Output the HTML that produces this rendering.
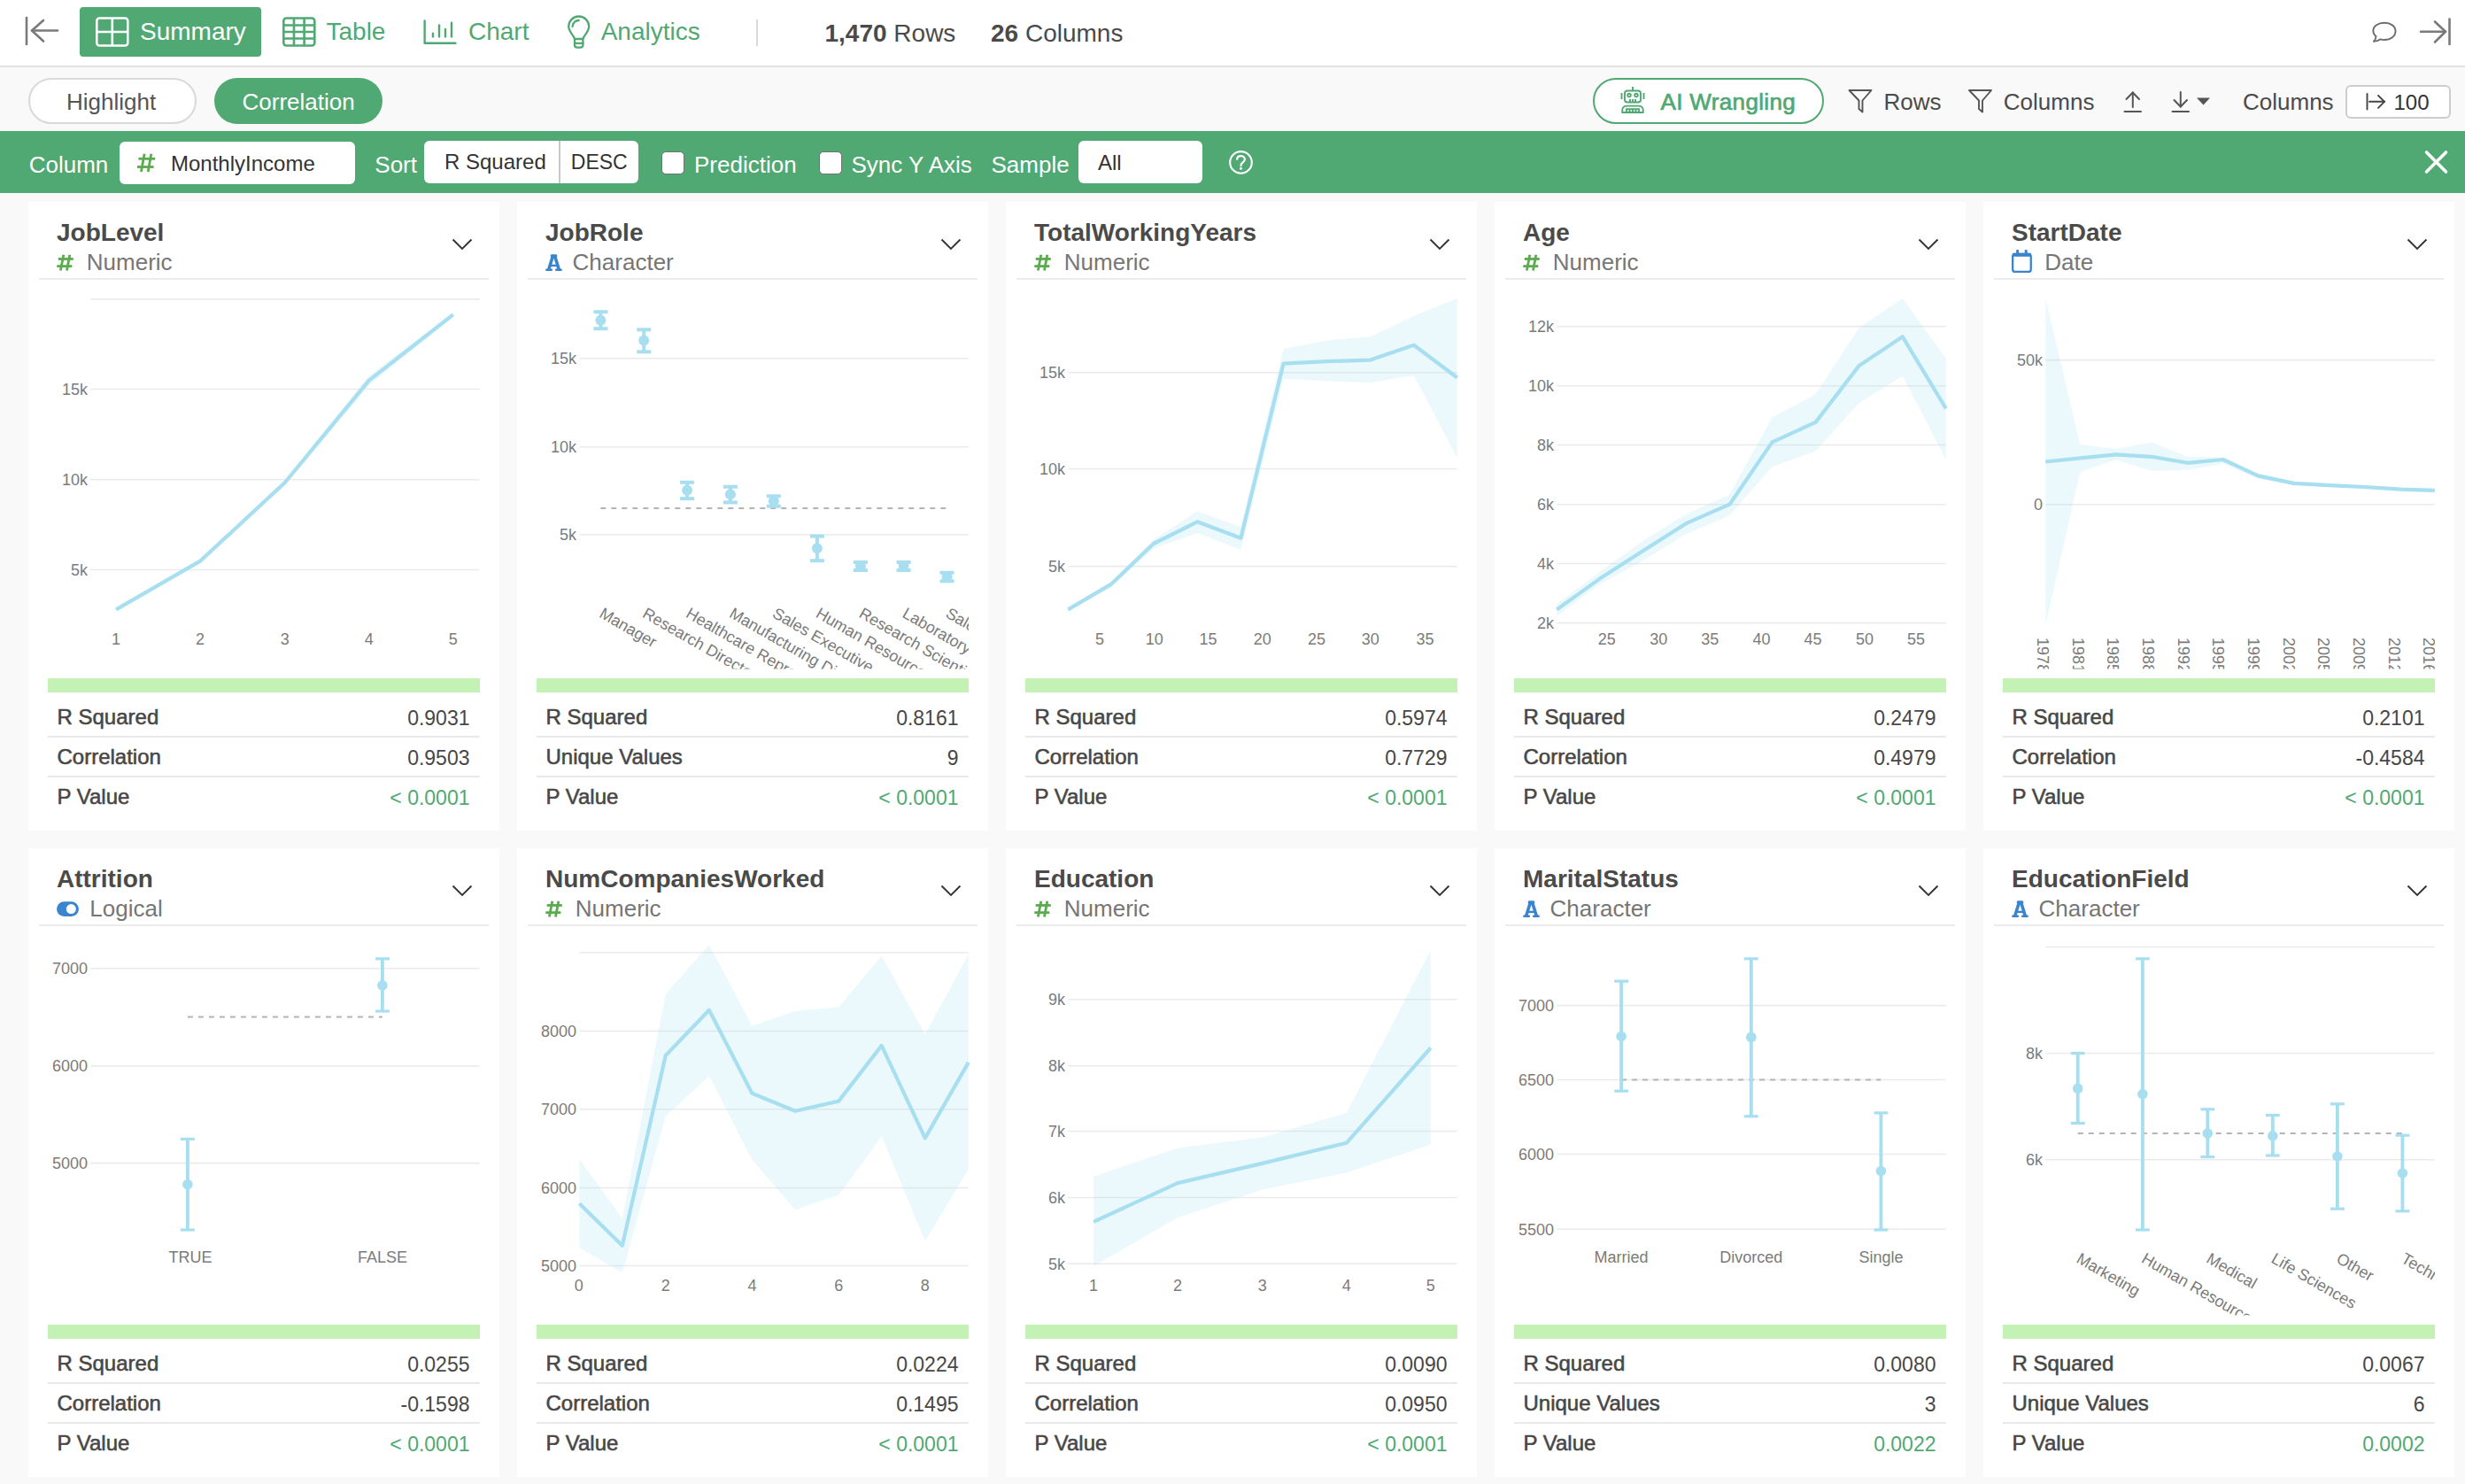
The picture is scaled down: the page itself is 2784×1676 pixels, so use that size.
<!DOCTYPE html>
<html><head><meta charset="utf-8"><title>Summary - Correlation</title>
<style>
html,body{margin:0;padding:0;}
body{width:2784px;height:1676px;position:relative;overflow:hidden;background:#f9f9f9;font-family:"Liberation Sans",sans-serif;}
.t{position:absolute;white-space:nowrap;}
.r{position:absolute;}
svg{position:absolute;left:0;top:0;}
.ax{font-family:"Liberation Sans",sans-serif;font-size:18px;fill:#7b7b7b;}
</style></head><body>
<div class="r" style="left:0.0px;top:0.0px;width:2784.0px;height:74.0px;background:#fff"></div><div class="r" style="left:0.0px;top:74.0px;width:2784.0px;height:2.0px;background:#e3e3e3"></div><div class="r" style="left:0.0px;top:76.0px;width:2784.0px;height:72.0px;background:#f9f9f9"></div><div class="r" style="left:90.0px;top:8.0px;width:205.0px;height:56.0px;background:#50a872;border-radius:4px"></div><div class="t" style="left:158.0px;top:22.0px;font-size:28px;line-height:28px;color:#fff;font-weight:normal;">Summary</div><div class="t" style="left:368.5px;top:22.0px;font-size:28px;line-height:28px;color:#50a872;font-weight:normal;">Table</div><div class="t" style="left:529.0px;top:22.0px;font-size:28px;line-height:28px;color:#50a872;font-weight:normal;">Chart</div><div class="t" style="left:678.7px;top:22.0px;font-size:28px;line-height:28px;color:#50a872;font-weight:normal;">Analytics</div><div class="r" style="left:853.5px;top:22.0px;width:2.0px;height:30.0px;background:#d9d9d9"></div><div class="t" style="left:931.5px;top:23.7px;font-size:28px;line-height:28px;color:#4a4a4a"><b>1,470</b> Rows</div><div class="t" style="left:1119px;top:23.7px;font-size:28px;line-height:28px;color:#4a4a4a"><b>26</b> Columns</div><div class="r" style="left:32.0px;top:88.0px;width:189.5px;height:52.0px;background:#fff;border:2px solid #d9d9d9;border-radius:26px;box-sizing:border-box"></div><div class="t" style="left:75.0px;top:101.7px;font-size:26px;line-height:26px;color:#555;font-weight:normal;">Highlight</div><div class="r" style="left:242.0px;top:88.0px;width:190.0px;height:52.0px;background:#50a872;border-radius:26px"></div><div class="t" style="left:273.5px;top:101.7px;font-size:26px;line-height:26px;color:#fff;font-weight:normal;">Correlation</div><div class="r" style="left:1799.0px;top:88.0px;width:260.5px;height:52.0px;background:#fff;border:2px solid #50a872;border-radius:26px;box-sizing:border-box"></div><div class="t" style="left:1875.5px;top:102.3px;font-size:26px;line-height:26px;color:#50a872;font-weight:normal;-webkit-text-stroke:0.7px #50a872;letter-spacing:0.35px">AI Wrangling</div><div class="t" style="left:2127.6px;top:102.3px;font-size:26px;line-height:26px;color:#4a4a4a;font-weight:normal;">Rows</div><div class="t" style="left:2262.8px;top:102.3px;font-size:26px;line-height:26px;color:#4a4a4a;font-weight:normal;">Columns</div><div class="t" style="left:2533.0px;top:102.3px;font-size:26px;line-height:26px;color:#4a4a4a;font-weight:normal;">Columns</div><div class="r" style="left:2648.5px;top:95.5px;width:119.0px;height:38.5px;background:#fff;border:2px solid #cdcdcd;border-radius:6px;box-sizing:border-box"></div><div class="t" style="left:2703.5px;top:103.5px;font-size:24px;line-height:24px;color:#333;font-weight:normal;">100</div><div class="r" style="left:0.0px;top:148.0px;width:2784.0px;height:70.0px;background:#50a872"></div><div class="t" style="left:32.7px;top:173.0px;font-size:26px;line-height:26px;color:#fff;font-weight:normal;">Column</div><div class="r" style="left:135.0px;top:160.0px;width:266.0px;height:48.0px;background:#fff;border-radius:6px"></div><div class="t" style="left:193.0px;top:172.9px;font-size:24px;line-height:24px;color:#333;font-weight:normal;">MonthlyIncome</div><div class="t" style="left:423.3px;top:173.0px;font-size:26px;line-height:26px;color:#fff;font-weight:normal;">Sort</div><div class="r" style="left:479.0px;top:159.0px;width:242.0px;height:48.0px;background:#fff;border-radius:6px"></div><div class="r" style="left:631.0px;top:159.0px;width:2.0px;height:48.0px;background:#c8c8c8"></div><div class="t" style="left:502.0px;top:171.3px;font-size:24px;line-height:24px;color:#333;font-weight:normal;">R Squared</div><div class="t" style="left:644.8px;top:172.1px;font-size:23px;line-height:23px;color:#333;font-weight:normal;">DESC</div><div class="r" style="left:747.2px;top:171.1px;width:25.5px;height:25.7px;background:#fff;border:1.9px solid #727272;border-radius:5px;box-sizing:border-box"></div><div class="t" style="left:784.0px;top:173.0px;font-size:26px;line-height:26px;color:#fff;font-weight:normal;">Prediction</div><div class="r" style="left:925.2px;top:171.1px;width:25.5px;height:25.7px;background:#fff;border:1.9px solid #727272;border-radius:5px;box-sizing:border-box"></div><div class="t" style="left:961.5px;top:173.0px;font-size:26px;line-height:26px;color:#fff;font-weight:normal;">Sync Y Axis</div><div class="t" style="left:1119.5px;top:173.0px;font-size:26px;line-height:26px;color:#fff;font-weight:normal;">Sample</div><div class="r" style="left:1218.0px;top:159.0px;width:140.0px;height:48.0px;background:#fff;border-radius:6px"></div><div class="t" style="left:1240.0px;top:171.7px;font-size:24px;line-height:24px;color:#333;font-weight:normal;">All</div><div class="r" style="left:32.0px;top:228.0px;width:532.0px;height:710.0px;background:#fff"></div><div class="t" style="left:64.0px;top:248.6px;font-size:28px;line-height:28px;color:#4a4a4a;font-weight:bold;">JobLevel</div><div class="t" style="left:97.8px;top:283.2px;font-size:26px;line-height:26px;color:#767676;font-weight:normal;">Numeric</div><div class="r" style="left:44.0px;top:313.5px;width:508.0px;height:2.0px;background:#ececec"></div><div class="r" style="left:54.0px;top:766.0px;width:488.0px;height:16.0px;background:#c3f2b4"></div><div class="t" style="left:64.5px;top:798.0px;font-size:24px;line-height:24px;color:#474747;font-weight:normal;-webkit-text-stroke:0.55px #474747">R Squared</div><div class="t" style="left:-469.5px;width:1000px;text-align:right;top:800.3px;font-size:23px;line-height:23px;color:#474747;font-weight:normal;">0.9031</div><div class="r" style="left:54.0px;top:831.0px;width:488.0px;height:2.0px;background:#e9e9e9"></div><div class="t" style="left:64.5px;top:843.0px;font-size:24px;line-height:24px;color:#474747;font-weight:normal;-webkit-text-stroke:0.55px #474747">Correlation</div><div class="t" style="left:-469.5px;width:1000px;text-align:right;top:845.3px;font-size:23px;line-height:23px;color:#474747;font-weight:normal;">0.9503</div><div class="r" style="left:54.0px;top:876.0px;width:488.0px;height:2.0px;background:#e9e9e9"></div><div class="t" style="left:64.5px;top:888.0px;font-size:24px;line-height:24px;color:#474747;font-weight:normal;-webkit-text-stroke:0.55px #474747">P Value</div><div class="t" style="left:-469.5px;width:1000px;text-align:right;top:890.3px;font-size:23px;line-height:23px;color:#50a872;font-weight:normal;">&lt; 0.0001</div><div class="r" style="left:584.0px;top:228.0px;width:532.0px;height:710.0px;background:#fff"></div><div class="t" style="left:616.0px;top:248.6px;font-size:28px;line-height:28px;color:#4a4a4a;font-weight:bold;">JobRole</div><div class="t" style="left:646.6px;top:283.2px;font-size:26px;line-height:26px;color:#767676;font-weight:normal;">Character</div><div class="r" style="left:596.0px;top:313.5px;width:508.0px;height:2.0px;background:#ececec"></div><div class="r" style="left:606.0px;top:766.0px;width:488.0px;height:16.0px;background:#c3f2b4"></div><div class="t" style="left:616.5px;top:798.0px;font-size:24px;line-height:24px;color:#474747;font-weight:normal;-webkit-text-stroke:0.55px #474747">R Squared</div><div class="t" style="left:82.5px;width:1000px;text-align:right;top:800.3px;font-size:23px;line-height:23px;color:#474747;font-weight:normal;">0.8161</div><div class="r" style="left:606.0px;top:831.0px;width:488.0px;height:2.0px;background:#e9e9e9"></div><div class="t" style="left:616.5px;top:843.0px;font-size:24px;line-height:24px;color:#474747;font-weight:normal;-webkit-text-stroke:0.55px #474747">Unique Values</div><div class="t" style="left:82.5px;width:1000px;text-align:right;top:845.3px;font-size:23px;line-height:23px;color:#474747;font-weight:normal;">9</div><div class="r" style="left:606.0px;top:876.0px;width:488.0px;height:2.0px;background:#e9e9e9"></div><div class="t" style="left:616.5px;top:888.0px;font-size:24px;line-height:24px;color:#474747;font-weight:normal;-webkit-text-stroke:0.55px #474747">P Value</div><div class="t" style="left:82.5px;width:1000px;text-align:right;top:890.3px;font-size:23px;line-height:23px;color:#50a872;font-weight:normal;">&lt; 0.0001</div><div class="r" style="left:1136.0px;top:228.0px;width:532.0px;height:710.0px;background:#fff"></div><div class="t" style="left:1168.0px;top:248.6px;font-size:28px;line-height:28px;color:#4a4a4a;font-weight:bold;">TotalWorkingYears</div><div class="t" style="left:1201.8px;top:283.2px;font-size:26px;line-height:26px;color:#767676;font-weight:normal;">Numeric</div><div class="r" style="left:1148.0px;top:313.5px;width:508.0px;height:2.0px;background:#ececec"></div><div class="r" style="left:1158.0px;top:766.0px;width:488.0px;height:16.0px;background:#c3f2b4"></div><div class="t" style="left:1168.5px;top:798.0px;font-size:24px;line-height:24px;color:#474747;font-weight:normal;-webkit-text-stroke:0.55px #474747">R Squared</div><div class="t" style="left:634.5px;width:1000px;text-align:right;top:800.3px;font-size:23px;line-height:23px;color:#474747;font-weight:normal;">0.5974</div><div class="r" style="left:1158.0px;top:831.0px;width:488.0px;height:2.0px;background:#e9e9e9"></div><div class="t" style="left:1168.5px;top:843.0px;font-size:24px;line-height:24px;color:#474747;font-weight:normal;-webkit-text-stroke:0.55px #474747">Correlation</div><div class="t" style="left:634.5px;width:1000px;text-align:right;top:845.3px;font-size:23px;line-height:23px;color:#474747;font-weight:normal;">0.7729</div><div class="r" style="left:1158.0px;top:876.0px;width:488.0px;height:2.0px;background:#e9e9e9"></div><div class="t" style="left:1168.5px;top:888.0px;font-size:24px;line-height:24px;color:#474747;font-weight:normal;-webkit-text-stroke:0.55px #474747">P Value</div><div class="t" style="left:634.5px;width:1000px;text-align:right;top:890.3px;font-size:23px;line-height:23px;color:#50a872;font-weight:normal;">&lt; 0.0001</div><div class="r" style="left:1688.0px;top:228.0px;width:532.0px;height:710.0px;background:#fff"></div><div class="t" style="left:1720.0px;top:248.6px;font-size:28px;line-height:28px;color:#4a4a4a;font-weight:bold;">Age</div><div class="t" style="left:1753.8px;top:283.2px;font-size:26px;line-height:26px;color:#767676;font-weight:normal;">Numeric</div><div class="r" style="left:1700.0px;top:313.5px;width:508.0px;height:2.0px;background:#ececec"></div><div class="r" style="left:1710.0px;top:766.0px;width:488.0px;height:16.0px;background:#c3f2b4"></div><div class="t" style="left:1720.5px;top:798.0px;font-size:24px;line-height:24px;color:#474747;font-weight:normal;-webkit-text-stroke:0.55px #474747">R Squared</div><div class="t" style="left:1186.5px;width:1000px;text-align:right;top:800.3px;font-size:23px;line-height:23px;color:#474747;font-weight:normal;">0.2479</div><div class="r" style="left:1710.0px;top:831.0px;width:488.0px;height:2.0px;background:#e9e9e9"></div><div class="t" style="left:1720.5px;top:843.0px;font-size:24px;line-height:24px;color:#474747;font-weight:normal;-webkit-text-stroke:0.55px #474747">Correlation</div><div class="t" style="left:1186.5px;width:1000px;text-align:right;top:845.3px;font-size:23px;line-height:23px;color:#474747;font-weight:normal;">0.4979</div><div class="r" style="left:1710.0px;top:876.0px;width:488.0px;height:2.0px;background:#e9e9e9"></div><div class="t" style="left:1720.5px;top:888.0px;font-size:24px;line-height:24px;color:#474747;font-weight:normal;-webkit-text-stroke:0.55px #474747">P Value</div><div class="t" style="left:1186.5px;width:1000px;text-align:right;top:890.3px;font-size:23px;line-height:23px;color:#50a872;font-weight:normal;">&lt; 0.0001</div><div class="r" style="left:2240.0px;top:228.0px;width:532.0px;height:710.0px;background:#fff"></div><div class="t" style="left:2272.0px;top:248.6px;font-size:28px;line-height:28px;color:#4a4a4a;font-weight:bold;">StartDate</div><div class="t" style="left:2309.3px;top:283.2px;font-size:26px;line-height:26px;color:#767676;font-weight:normal;">Date</div><div class="r" style="left:2252.0px;top:313.5px;width:508.0px;height:2.0px;background:#ececec"></div><div class="r" style="left:2262.0px;top:766.0px;width:488.0px;height:16.0px;background:#c3f2b4"></div><div class="t" style="left:2272.5px;top:798.0px;font-size:24px;line-height:24px;color:#474747;font-weight:normal;-webkit-text-stroke:0.55px #474747">R Squared</div><div class="t" style="left:1738.5px;width:1000px;text-align:right;top:800.3px;font-size:23px;line-height:23px;color:#474747;font-weight:normal;">0.2101</div><div class="r" style="left:2262.0px;top:831.0px;width:488.0px;height:2.0px;background:#e9e9e9"></div><div class="t" style="left:2272.5px;top:843.0px;font-size:24px;line-height:24px;color:#474747;font-weight:normal;-webkit-text-stroke:0.55px #474747">Correlation</div><div class="t" style="left:1738.5px;width:1000px;text-align:right;top:845.3px;font-size:23px;line-height:23px;color:#474747;font-weight:normal;">-0.4584</div><div class="r" style="left:2262.0px;top:876.0px;width:488.0px;height:2.0px;background:#e9e9e9"></div><div class="t" style="left:2272.5px;top:888.0px;font-size:24px;line-height:24px;color:#474747;font-weight:normal;-webkit-text-stroke:0.55px #474747">P Value</div><div class="t" style="left:1738.5px;width:1000px;text-align:right;top:890.3px;font-size:23px;line-height:23px;color:#50a872;font-weight:normal;">&lt; 0.0001</div><div class="r" style="left:32.0px;top:958.0px;width:532.0px;height:710.0px;background:#fff"></div><div class="t" style="left:64.0px;top:978.6px;font-size:28px;line-height:28px;color:#4a4a4a;font-weight:bold;">Attrition</div><div class="t" style="left:101.3px;top:1013.2px;font-size:26px;line-height:26px;color:#767676;font-weight:normal;">Logical</div><div class="r" style="left:44.0px;top:1043.5px;width:508.0px;height:2.0px;background:#ececec"></div><div class="r" style="left:54.0px;top:1496.0px;width:488.0px;height:16.0px;background:#c3f2b4"></div><div class="t" style="left:64.5px;top:1528.0px;font-size:24px;line-height:24px;color:#474747;font-weight:normal;-webkit-text-stroke:0.55px #474747">R Squared</div><div class="t" style="left:-469.5px;width:1000px;text-align:right;top:1530.3px;font-size:23px;line-height:23px;color:#474747;font-weight:normal;">0.0255</div><div class="r" style="left:54.0px;top:1561.0px;width:488.0px;height:2.0px;background:#e9e9e9"></div><div class="t" style="left:64.5px;top:1573.0px;font-size:24px;line-height:24px;color:#474747;font-weight:normal;-webkit-text-stroke:0.55px #474747">Correlation</div><div class="t" style="left:-469.5px;width:1000px;text-align:right;top:1575.3px;font-size:23px;line-height:23px;color:#474747;font-weight:normal;">-0.1598</div><div class="r" style="left:54.0px;top:1606.0px;width:488.0px;height:2.0px;background:#e9e9e9"></div><div class="t" style="left:64.5px;top:1618.0px;font-size:24px;line-height:24px;color:#474747;font-weight:normal;-webkit-text-stroke:0.55px #474747">P Value</div><div class="t" style="left:-469.5px;width:1000px;text-align:right;top:1620.3px;font-size:23px;line-height:23px;color:#50a872;font-weight:normal;">&lt; 0.0001</div><div class="r" style="left:584.0px;top:958.0px;width:532.0px;height:710.0px;background:#fff"></div><div class="t" style="left:616.0px;top:978.6px;font-size:28px;line-height:28px;color:#4a4a4a;font-weight:bold;">NumCompaniesWorked</div><div class="t" style="left:649.8px;top:1013.2px;font-size:26px;line-height:26px;color:#767676;font-weight:normal;">Numeric</div><div class="r" style="left:596.0px;top:1043.5px;width:508.0px;height:2.0px;background:#ececec"></div><div class="r" style="left:606.0px;top:1496.0px;width:488.0px;height:16.0px;background:#c3f2b4"></div><div class="t" style="left:616.5px;top:1528.0px;font-size:24px;line-height:24px;color:#474747;font-weight:normal;-webkit-text-stroke:0.55px #474747">R Squared</div><div class="t" style="left:82.5px;width:1000px;text-align:right;top:1530.3px;font-size:23px;line-height:23px;color:#474747;font-weight:normal;">0.0224</div><div class="r" style="left:606.0px;top:1561.0px;width:488.0px;height:2.0px;background:#e9e9e9"></div><div class="t" style="left:616.5px;top:1573.0px;font-size:24px;line-height:24px;color:#474747;font-weight:normal;-webkit-text-stroke:0.55px #474747">Correlation</div><div class="t" style="left:82.5px;width:1000px;text-align:right;top:1575.3px;font-size:23px;line-height:23px;color:#474747;font-weight:normal;">0.1495</div><div class="r" style="left:606.0px;top:1606.0px;width:488.0px;height:2.0px;background:#e9e9e9"></div><div class="t" style="left:616.5px;top:1618.0px;font-size:24px;line-height:24px;color:#474747;font-weight:normal;-webkit-text-stroke:0.55px #474747">P Value</div><div class="t" style="left:82.5px;width:1000px;text-align:right;top:1620.3px;font-size:23px;line-height:23px;color:#50a872;font-weight:normal;">&lt; 0.0001</div><div class="r" style="left:1136.0px;top:958.0px;width:532.0px;height:710.0px;background:#fff"></div><div class="t" style="left:1168.0px;top:978.6px;font-size:28px;line-height:28px;color:#4a4a4a;font-weight:bold;">Education</div><div class="t" style="left:1201.8px;top:1013.2px;font-size:26px;line-height:26px;color:#767676;font-weight:normal;">Numeric</div><div class="r" style="left:1148.0px;top:1043.5px;width:508.0px;height:2.0px;background:#ececec"></div><div class="r" style="left:1158.0px;top:1496.0px;width:488.0px;height:16.0px;background:#c3f2b4"></div><div class="t" style="left:1168.5px;top:1528.0px;font-size:24px;line-height:24px;color:#474747;font-weight:normal;-webkit-text-stroke:0.55px #474747">R Squared</div><div class="t" style="left:634.5px;width:1000px;text-align:right;top:1530.3px;font-size:23px;line-height:23px;color:#474747;font-weight:normal;">0.0090</div><div class="r" style="left:1158.0px;top:1561.0px;width:488.0px;height:2.0px;background:#e9e9e9"></div><div class="t" style="left:1168.5px;top:1573.0px;font-size:24px;line-height:24px;color:#474747;font-weight:normal;-webkit-text-stroke:0.55px #474747">Correlation</div><div class="t" style="left:634.5px;width:1000px;text-align:right;top:1575.3px;font-size:23px;line-height:23px;color:#474747;font-weight:normal;">0.0950</div><div class="r" style="left:1158.0px;top:1606.0px;width:488.0px;height:2.0px;background:#e9e9e9"></div><div class="t" style="left:1168.5px;top:1618.0px;font-size:24px;line-height:24px;color:#474747;font-weight:normal;-webkit-text-stroke:0.55px #474747">P Value</div><div class="t" style="left:634.5px;width:1000px;text-align:right;top:1620.3px;font-size:23px;line-height:23px;color:#50a872;font-weight:normal;">&lt; 0.0001</div><div class="r" style="left:1688.0px;top:958.0px;width:532.0px;height:710.0px;background:#fff"></div><div class="t" style="left:1720.0px;top:978.6px;font-size:28px;line-height:28px;color:#4a4a4a;font-weight:bold;">MaritalStatus</div><div class="t" style="left:1750.6px;top:1013.2px;font-size:26px;line-height:26px;color:#767676;font-weight:normal;">Character</div><div class="r" style="left:1700.0px;top:1043.5px;width:508.0px;height:2.0px;background:#ececec"></div><div class="r" style="left:1710.0px;top:1496.0px;width:488.0px;height:16.0px;background:#c3f2b4"></div><div class="t" style="left:1720.5px;top:1528.0px;font-size:24px;line-height:24px;color:#474747;font-weight:normal;-webkit-text-stroke:0.55px #474747">R Squared</div><div class="t" style="left:1186.5px;width:1000px;text-align:right;top:1530.3px;font-size:23px;line-height:23px;color:#474747;font-weight:normal;">0.0080</div><div class="r" style="left:1710.0px;top:1561.0px;width:488.0px;height:2.0px;background:#e9e9e9"></div><div class="t" style="left:1720.5px;top:1573.0px;font-size:24px;line-height:24px;color:#474747;font-weight:normal;-webkit-text-stroke:0.55px #474747">Unique Values</div><div class="t" style="left:1186.5px;width:1000px;text-align:right;top:1575.3px;font-size:23px;line-height:23px;color:#474747;font-weight:normal;">3</div><div class="r" style="left:1710.0px;top:1606.0px;width:488.0px;height:2.0px;background:#e9e9e9"></div><div class="t" style="left:1720.5px;top:1618.0px;font-size:24px;line-height:24px;color:#474747;font-weight:normal;-webkit-text-stroke:0.55px #474747">P Value</div><div class="t" style="left:1186.5px;width:1000px;text-align:right;top:1620.3px;font-size:23px;line-height:23px;color:#50a872;font-weight:normal;">0.0022</div><div class="r" style="left:2240.0px;top:958.0px;width:532.0px;height:710.0px;background:#fff"></div><div class="t" style="left:2272.0px;top:978.6px;font-size:28px;line-height:28px;color:#4a4a4a;font-weight:bold;">EducationField</div><div class="t" style="left:2302.6px;top:1013.2px;font-size:26px;line-height:26px;color:#767676;font-weight:normal;">Character</div><div class="r" style="left:2252.0px;top:1043.5px;width:508.0px;height:2.0px;background:#ececec"></div><div class="r" style="left:2262.0px;top:1496.0px;width:488.0px;height:16.0px;background:#c3f2b4"></div><div class="t" style="left:2272.5px;top:1528.0px;font-size:24px;line-height:24px;color:#474747;font-weight:normal;-webkit-text-stroke:0.55px #474747">R Squared</div><div class="t" style="left:1738.5px;width:1000px;text-align:right;top:1530.3px;font-size:23px;line-height:23px;color:#474747;font-weight:normal;">0.0067</div><div class="r" style="left:2262.0px;top:1561.0px;width:488.0px;height:2.0px;background:#e9e9e9"></div><div class="t" style="left:2272.5px;top:1573.0px;font-size:24px;line-height:24px;color:#474747;font-weight:normal;-webkit-text-stroke:0.55px #474747">Unique Values</div><div class="t" style="left:1738.5px;width:1000px;text-align:right;top:1575.3px;font-size:23px;line-height:23px;color:#474747;font-weight:normal;">6</div><div class="r" style="left:2262.0px;top:1606.0px;width:488.0px;height:2.0px;background:#e9e9e9"></div><div class="t" style="left:2272.5px;top:1618.0px;font-size:24px;line-height:24px;color:#474747;font-weight:normal;-webkit-text-stroke:0.55px #474747">P Value</div><div class="t" style="left:1738.5px;width:1000px;text-align:right;top:1620.3px;font-size:23px;line-height:23px;color:#50a872;font-weight:normal;">0.0002</div>
<svg width="2784" height="1676" viewBox="0 0 2784 1676"><g stroke="#7a7a7a" stroke-width="2.6" fill="none" stroke-linecap="round" stroke-linejoin="round"><line x1="30" y1="20" x2="30" y2="50"/><line x1="36" y1="34.5" x2="65" y2="34.5"/><polyline points="49,23 36,34.5 49,46.5"/></g><g stroke="#fff" stroke-width="2.6" fill="none"><rect x="109.3" y="20.5" width="35" height="31" rx="3"/><line x1="126.8" y1="20.5" x2="126.8" y2="51.5"/><line x1="109.3" y1="36" x2="144.3" y2="36"/></g><g stroke="#50a872" stroke-width="2.6" fill="none"><rect x="320.3" y="20.5" width="35" height="31" rx="3"/><line x1="332" y1="20.5" x2="332" y2="51.5"/><line x1="343.6" y1="20.5" x2="343.6" y2="51.5"/><line x1="320.3" y1="28.5" x2="355.3" y2="28.5"/><line x1="320.3" y1="36" x2="355.3" y2="36"/><line x1="320.3" y1="43.5" x2="355.3" y2="43.5"/></g><g stroke="#50a872" stroke-width="2.4" fill="none" stroke-linecap="round" stroke-linejoin="round"><polyline points="479.6,23.4 479.6,48.7 514.4,48.7"/><line x1="489" y1="37.6" x2="489" y2="41.4"/><line x1="496" y1="28.4" x2="496" y2="41.4"/><line x1="503" y1="32.9" x2="503" y2="41.4"/><line x1="510" y1="25.8" x2="510" y2="41.4"/></g><g stroke="#50a872" stroke-width="2.3" fill="none" stroke-linecap="round" stroke-linejoin="round"><path d="M649,44 C648.2,40 642.3,35.8 642.2,30 A11.5,11.5 0 1 1 665.2,30 C665.1,35.8 659.2,40 658.4,44 Z"/><path d="M649,44 L649,50.8 Q649,53.6 652,53.6 L655.4,53.6 Q658.4,53.6 658.4,50.8 L658.4,44"/><line x1="649" y1="48.9" x2="658.4" y2="48.9"/><path d="M646.6,30 A7.1,7.1 0 0 1 653.7,23"/></g><g stroke="#6d6d6d" stroke-width="1.9" fill="none" stroke-linejoin="round"><path d="M2683.5,41 C2680.5,38.5 2680.3,35.5 2680.3,35 C2680.3,29.5 2686,25.8 2693,25.8 C2700,25.8 2705.5,29.5 2705.5,35.3 C2705.5,41 2700,45 2693,45 C2691.5,45 2690,44.7 2688.5,44.3 C2686.5,45.8 2684,46.8 2680.8,46.8 C2682.5,45 2683.5,43 2683.5,41 Z"/></g><g stroke="#7a7a7a" stroke-width="2.6" fill="none" stroke-linecap="round" stroke-linejoin="round"><line x1="2734" y1="35.8" x2="2762" y2="35.8"/><polyline points="2750,24.5 2762,35.8 2750,47.5"/><line x1="2766.5" y1="21.5" x2="2766.5" y2="50"/></g><g stroke="#50a872" stroke-width="1.9" fill="none"><line x1="1844" y1="98" x2="1844" y2="102"/><rect x="1835" y="102.5" width="18" height="13" rx="3"/><circle cx="1840" cy="107.5" r="1.8"/><circle cx="1848" cy="107.5" r="1.8"/><line x1="1841" y1="112" x2="1841" y2="115"/><line x1="1844" y1="112" x2="1844" y2="115"/><line x1="1847" y1="112" x2="1847" y2="115"/><line x1="1831.5" y1="105" x2="1831.5" y2="112"/><line x1="1856.5" y1="105" x2="1856.5" y2="112"/><path d="M1832.3,127 L1832.3,123.5 Q1833,119.6 1837.5,119.6 L1850.5,119.6 Q1855,119.6 1855.7,123.5 L1855.7,127 Z"/><rect x="1837" y="123.2" width="14" height="3.6"/><line x1="1840.5" y1="123.2" x2="1840.5" y2="126.8"/><line x1="1844" y1="123.2" x2="1844" y2="126.8"/><line x1="1847.5" y1="123.2" x2="1847.5" y2="126.8"/></g><path d="M2088.5,102 L2113.5,102 L2103.5,113.5 L2103.5,126.5 L2099.5,123 L2099.5,113.5 Z" stroke="#555" stroke-width="1.9" fill="none" stroke-linejoin="round"/><path d="M2224,102 L2249,102 L2239,113.5 L2239,126.5 L2235,123 L2235,113.5 Z" stroke="#555" stroke-width="1.9" fill="none" stroke-linejoin="round"/><g stroke="#555" stroke-width="2" fill="none" stroke-linecap="round"><line x1="2399.5" y1="126" x2="2418" y2="126"/><line x1="2408.8" y1="104.5" x2="2408.8" y2="121"/><polyline points="2401.5,112 2408.8,104.5 2416,112"/><line x1="2453.5" y1="126" x2="2472" y2="126"/><line x1="2462.8" y1="104" x2="2462.8" y2="120.5"/><polyline points="2455.5,113 2462.8,120.5 2470,113"/></g><path d="M2481,110.5 L2496,110.5 L2488.5,118.5 Z" fill="#555"/><g stroke="#444" stroke-width="1.9" fill="none" stroke-linecap="round"><line x1="2673.5" y1="106" x2="2673.5" y2="123.5"/><line x1="2676" y1="114.8" x2="2693" y2="114.8"/><polyline points="2686,107.8 2693,114.8 2686,121.8"/></g><g stroke="#5caa4f" stroke-width="2.8" stroke-linecap="butt" fill="none"><line x1="163.12" y1="173.82" x2="159.41" y2="193.98"/><line x1="170.82" y1="173.82" x2="167.18" y2="193.98"/><line x1="156.44" y1="179.28" x2="175.20" y2="179.28"/><line x1="154.90" y1="188.52" x2="173.56" y2="188.52"/></g><circle cx="1401.5" cy="183.4" r="12.3" stroke="#fff" stroke-width="2.1" fill="none"/><path d="M1397.2,179.6 C1397.4,177.3 1399.3,176.2 1401.5,176.2 C1404,176.2 1405.9,177.9 1405.9,180.1 C1405.9,182.1 1404.5,183 1403.2,183.9 C1402,184.7 1401.5,185.4 1401.5,187.2" stroke="#fff" stroke-width="2.3" fill="none" stroke-linecap="round"/><circle cx="1401.5" cy="190.3" r="1.5" fill="#fff"/><g stroke="#fff" stroke-width="3.6" stroke-linecap="round"><line x1="2740.5" y1="172" x2="2762.5" y2="194"/><line x1="2762.5" y1="172" x2="2740.5" y2="194"/></g><g stroke="#5caa4f" stroke-width="2.8" stroke-linecap="butt" fill="none"><line x1="71.79" y1="287.67" x2="68.41" y2="305.43"/><line x1="78.80" y1="287.67" x2="75.49" y2="305.43"/><line x1="65.71" y1="292.48" x2="82.80" y2="292.48"/><line x1="64.30" y1="300.62" x2="81.30" y2="300.62"/></g><polyline points="511.5,270.5 522,281 532.5,270.5" stroke="#333" stroke-width="1.9" fill="none"/><g stroke="#3a84cf" fill="none"><path d="M624.6,288.5 L619.6,304.7 M626.4,288.5 L631.4,304.7" stroke-width="3.6"/><path d="M623.2,288.9 L627.8,288.9" stroke-width="3.2" stroke-linecap="round"/><line x1="621.6" y1="299.9" x2="629.4" y2="299.9" stroke-width="2.4"/><line x1="617.4" y1="304.7" x2="622.8" y2="304.7" stroke-width="2.6" stroke-linecap="round"/><line x1="628.2" y1="304.7" x2="633.6" y2="304.7" stroke-width="2.6" stroke-linecap="round"/></g><polyline points="1063.5,270.5 1074,281 1084.5,270.5" stroke="#333" stroke-width="1.9" fill="none"/><g stroke="#5caa4f" stroke-width="2.8" stroke-linecap="butt" fill="none"><line x1="1175.79" y1="287.67" x2="1172.41" y2="305.43"/><line x1="1182.80" y1="287.67" x2="1179.49" y2="305.43"/><line x1="1169.71" y1="292.48" x2="1186.80" y2="292.48"/><line x1="1168.30" y1="300.62" x2="1185.30" y2="300.62"/></g><polyline points="1615.5,270.5 1626,281 1636.5,270.5" stroke="#333" stroke-width="1.9" fill="none"/><g stroke="#5caa4f" stroke-width="2.8" stroke-linecap="butt" fill="none"><line x1="1727.79" y1="287.67" x2="1724.41" y2="305.43"/><line x1="1734.80" y1="287.67" x2="1731.49" y2="305.43"/><line x1="1721.71" y1="292.48" x2="1738.80" y2="292.48"/><line x1="1720.30" y1="300.62" x2="1737.30" y2="300.62"/></g><polyline points="2167.5,270.5 2178,281 2188.5,270.5" stroke="#333" stroke-width="1.9" fill="none"/><g stroke="#3a84cf" fill="none"><rect x="2273.15" y="286.85" width="20.6" height="20.1" rx="2.8" stroke-width="2.3"/><line x1="2273.15" y1="287.80" x2="2293.75" y2="287.80" stroke-width="4"/><line x1="2278.6" y1="282.1" x2="2278.6" y2="287.0" stroke-width="2.9"/><line x1="2288.2" y1="282.1" x2="2288.2" y2="287.0" stroke-width="2.9"/></g><polyline points="2719.5,270.5 2730,281 2740.5,270.5" stroke="#333" stroke-width="1.9" fill="none"/><rect x="64" y="1018.2" width="25" height="16.8" rx="8.4" fill="#3b84cf"/><circle cx="80.3" cy="1026.6" r="5.5" fill="#fff"/><polyline points="511.5,1000.5 522,1011 532.5,1000.5" stroke="#333" stroke-width="1.9" fill="none"/><g stroke="#5caa4f" stroke-width="2.8" stroke-linecap="butt" fill="none"><line x1="623.79" y1="1017.67" x2="620.41" y2="1035.43"/><line x1="630.80" y1="1017.67" x2="627.49" y2="1035.43"/><line x1="617.71" y1="1022.48" x2="634.80" y2="1022.48"/><line x1="616.30" y1="1030.62" x2="633.30" y2="1030.62"/></g><polyline points="1063.5,1000.5 1074,1011 1084.5,1000.5" stroke="#333" stroke-width="1.9" fill="none"/><g stroke="#5caa4f" stroke-width="2.8" stroke-linecap="butt" fill="none"><line x1="1175.79" y1="1017.67" x2="1172.41" y2="1035.43"/><line x1="1182.80" y1="1017.67" x2="1179.49" y2="1035.43"/><line x1="1169.71" y1="1022.48" x2="1186.80" y2="1022.48"/><line x1="1168.30" y1="1030.62" x2="1185.30" y2="1030.62"/></g><polyline points="1615.5,1000.5 1626,1011 1636.5,1000.5" stroke="#333" stroke-width="1.9" fill="none"/><g stroke="#3a84cf" fill="none"><path d="M1728.6,1018.5 L1723.6,1034.7 M1730.4,1018.5 L1735.4,1034.7" stroke-width="3.6"/><path d="M1727.2,1018.9 L1731.8,1018.9" stroke-width="3.2" stroke-linecap="round"/><line x1="1725.6" y1="1029.9" x2="1733.4" y2="1029.9" stroke-width="2.4"/><line x1="1721.4" y1="1034.7" x2="1726.8" y2="1034.7" stroke-width="2.6" stroke-linecap="round"/><line x1="1732.2" y1="1034.7" x2="1737.6" y2="1034.7" stroke-width="2.6" stroke-linecap="round"/></g><polyline points="2167.5,1000.5 2178,1011 2188.5,1000.5" stroke="#333" stroke-width="1.9" fill="none"/><g stroke="#3a84cf" fill="none"><path d="M2280.6,1018.5 L2275.6,1034.7 M2282.4,1018.5 L2287.4,1034.7" stroke-width="3.6"/><path d="M2279.2,1018.9 L2283.8,1018.9" stroke-width="3.2" stroke-linecap="round"/><line x1="2277.6" y1="1029.9" x2="2285.4" y2="1029.9" stroke-width="2.4"/><line x1="2273.4" y1="1034.7" x2="2278.8" y2="1034.7" stroke-width="2.6" stroke-linecap="round"/><line x1="2284.2" y1="1034.7" x2="2289.6" y2="1034.7" stroke-width="2.6" stroke-linecap="round"/></g><polyline points="2719.5,1000.5 2730,1011 2740.5,1000.5" stroke="#333" stroke-width="1.9" fill="none"/><line x1="102.3" y1="337.9" x2="541.8" y2="337.9" stroke="#ebebeb" stroke-width="1.6"/><line x1="102.3" y1="439.5" x2="541.8" y2="439.5" stroke="#ebebeb" stroke-width="1.6"/><line x1="102.3" y1="541.8" x2="541.8" y2="541.8" stroke="#ebebeb" stroke-width="1.6"/><line x1="102.3" y1="643.5" x2="541.8" y2="643.5" stroke="#ebebeb" stroke-width="1.6"/><text x="99.1" y="445.8" text-anchor="end" class="ax">15k</text><text x="99.1" y="548.1" text-anchor="end" class="ax">10k</text><text x="99.1" y="649.8" text-anchor="end" class="ax">5k</text><text x="131.1" y="728.0" text-anchor="middle" class="ax">1</text><text x="226.1" y="728.0" text-anchor="middle" class="ax">2</text><text x="321.8" y="728.0" text-anchor="middle" class="ax">3</text><text x="416.8" y="728.0" text-anchor="middle" class="ax">4</text><text x="511.8" y="728.0" text-anchor="middle" class="ax">5</text><polygon points="131.1,686.2 226.1,631.4 321.8,541.8 416.8,424.0 511.8,353.1 511.8,357.5 416.8,435.4 321.8,548.1 226.1,636.2 131.1,690.6" fill="rgb(166,222,242)" fill-opacity="0.22"/><polyline points="131.1,688.4 226.1,633.6 321.8,545.0 416.8,429.7 511.8,355.3" stroke="#a7dff1" stroke-width="4.2" fill="none" stroke-linejoin="round"/><line x1="654.5" y1="404.7" x2="1093.8" y2="404.7" stroke="#ebebeb" stroke-width="1.6"/><line x1="654.5" y1="504.8" x2="1093.8" y2="504.8" stroke="#ebebeb" stroke-width="1.6"/><line x1="654.5" y1="603.7" x2="1093.8" y2="603.7" stroke="#ebebeb" stroke-width="1.6"/><text x="651.0" y="411.0" text-anchor="end" class="ax">15k</text><text x="651.0" y="511.1" text-anchor="end" class="ax">10k</text><text x="651.0" y="610.0" text-anchor="end" class="ax">5k</text><line x1="678.3" y1="574.1" x2="1068.6" y2="574.1" stroke="#b4b4b4" stroke-width="2" stroke-dasharray="6,6"/><g stroke="#a7dff1"><line x1="678.4" y1="352.2" x2="678.4" y2="371.2" stroke-width="4"/><line x1="670.4" y1="352.2" x2="686.4" y2="352.2" stroke-width="4"/><line x1="670.4" y1="371.2" x2="686.4" y2="371.2" stroke-width="4"/></g><circle cx="678.4" cy="361.8" r="6" fill="#a7dff1"/><g stroke="#a7dff1"><line x1="727.2" y1="372.3" x2="727.2" y2="397.3" stroke-width="4"/><line x1="719.2" y1="372.3" x2="735.2" y2="372.3" stroke-width="4"/><line x1="719.2" y1="397.3" x2="735.2" y2="397.3" stroke-width="4"/></g><circle cx="727.2" cy="384.6" r="6" fill="#a7dff1"/><g stroke="#a7dff1"><line x1="776.1" y1="544.8" x2="776.1" y2="563.1" stroke-width="4"/><line x1="768.1" y1="544.8" x2="784.1" y2="544.8" stroke-width="4"/><line x1="768.1" y1="563.1" x2="784.1" y2="563.1" stroke-width="4"/></g><circle cx="776.1" cy="553.8" r="6" fill="#a7dff1"/><g stroke="#a7dff1"><line x1="824.9" y1="549.7" x2="824.9" y2="567.4" stroke-width="4"/><line x1="816.9" y1="549.7" x2="832.9" y2="549.7" stroke-width="4"/><line x1="816.9" y1="567.4" x2="832.9" y2="567.4" stroke-width="4"/></g><circle cx="824.9" cy="558.3" r="6" fill="#a7dff1"/><g stroke="#a7dff1"><line x1="873.9" y1="560.3" x2="873.9" y2="571.7" stroke-width="4"/><line x1="865.9" y1="560.3" x2="881.9" y2="560.3" stroke-width="4"/><line x1="865.9" y1="571.7" x2="881.9" y2="571.7" stroke-width="4"/></g><circle cx="873.9" cy="565.9" r="6" fill="#a7dff1"/><g stroke="#a7dff1"><line x1="922.9" y1="605.6" x2="922.9" y2="633.2" stroke-width="4"/><line x1="914.9" y1="605.6" x2="930.9" y2="605.6" stroke-width="4"/><line x1="914.9" y1="633.2" x2="930.9" y2="633.2" stroke-width="4"/></g><circle cx="922.9" cy="619.2" r="6" fill="#a7dff1"/><g stroke="#a7dff1"><line x1="971.9" y1="635.0" x2="971.9" y2="644.0" stroke-width="4"/><line x1="963.9" y1="635.0" x2="979.9" y2="635.0" stroke-width="4"/><line x1="963.9" y1="644.0" x2="979.9" y2="644.0" stroke-width="4"/></g><circle cx="971.9" cy="639.3" r="6" fill="#a7dff1"/><g stroke="#a7dff1"><line x1="1020.6" y1="635.0" x2="1020.6" y2="644.0" stroke-width="4"/><line x1="1012.6" y1="635.0" x2="1028.6" y2="635.0" stroke-width="4"/><line x1="1012.6" y1="644.0" x2="1028.6" y2="644.0" stroke-width="4"/></g><circle cx="1020.6" cy="639.3" r="6" fill="#a7dff1"/><g stroke="#a7dff1"><line x1="1069.6" y1="646.8" x2="1069.6" y2="656.3" stroke-width="4"/><line x1="1061.6" y1="646.8" x2="1077.6" y2="646.8" stroke-width="4"/><line x1="1061.6" y1="656.3" x2="1077.6" y2="656.3" stroke-width="4"/></g><circle cx="1069.6" cy="651.6" r="6" fill="#a7dff1"/><clipPath id="c1"><rect x="584" y="318" width="510" height="437.5"/></clipPath><g clip-path="url(#c1)"><text x="675.7" y="696.3" transform="rotate(30 675.7 696.3)" class="ax">Manager</text><text x="724.6" y="696.3" transform="rotate(30 724.6 696.3)" class="ax">Research Director</text><text x="773.5" y="696.3" transform="rotate(30 773.5 696.3)" class="ax">Healthcare Representative</text><text x="822.4" y="696.3" transform="rotate(30 822.4 696.3)" class="ax">Manufacturing Director</text><text x="871.3" y="696.3" transform="rotate(30 871.3 696.3)" class="ax">Sales Executive</text><text x="920.2" y="696.3" transform="rotate(30 920.2 696.3)" class="ax">Human Resources</text><text x="969.1" y="696.3" transform="rotate(30 969.1 696.3)" class="ax">Research Scientist</text><text x="1018.0" y="696.3" transform="rotate(30 1018.0 696.3)" class="ax">Laboratory Technician</text><text x="1066.9" y="696.3" transform="rotate(30 1066.9 696.3)" class="ax">Sales Representative</text></g><line x1="1206.3" y1="420.8" x2="1645.8" y2="420.8" stroke="#ebebeb" stroke-width="1.6"/><line x1="1206.3" y1="529.5" x2="1645.8" y2="529.5" stroke="#ebebeb" stroke-width="1.6"/><line x1="1206.3" y1="639.6" x2="1645.8" y2="639.6" stroke="#ebebeb" stroke-width="1.6"/><text x="1203.1" y="427.1" text-anchor="end" class="ax">15k</text><text x="1203.1" y="535.8" text-anchor="end" class="ax">10k</text><text x="1203.1" y="645.9" text-anchor="end" class="ax">5k</text><text x="1242.1" y="728.0" text-anchor="middle" class="ax">5</text><text x="1303.8" y="728.0" text-anchor="middle" class="ax">10</text><text x="1364.6" y="728.0" text-anchor="middle" class="ax">15</text><text x="1425.8" y="728.0" text-anchor="middle" class="ax">20</text><text x="1486.9" y="728.0" text-anchor="middle" class="ax">25</text><text x="1547.7" y="728.0" text-anchor="middle" class="ax">30</text><text x="1609.4" y="728.0" text-anchor="middle" class="ax">35</text><polygon points="1206.3,686.2 1254.8,657.4 1302.9,609.2 1352.3,577.6 1401.4,595.0 1449.5,393.9 1498.6,384.4 1547.7,380.3 1596.8,356.9 1645.8,336.9 1645.8,517.4 1596.8,424.0 1547.7,431.9 1498.6,430.3 1449.5,427.8 1401.4,621.0 1352.3,602.0 1302.9,619.7 1254.8,663.1 1206.3,690.6" fill="rgb(166,222,242)" fill-opacity="0.22"/><polyline points="1206.3,688.4 1254.8,659.9 1302.9,614.0 1352.3,589.3 1401.4,607.7 1449.5,410.7 1498.6,408.2 1547.7,406.6 1596.8,389.8 1645.8,426.5" stroke="#a7dff1" stroke-width="4.2" fill="none" stroke-linejoin="round"/><line x1="1758.3" y1="368.6" x2="2197.8" y2="368.6" stroke="#ebebeb" stroke-width="1.6"/><line x1="1758.3" y1="435.7" x2="2197.8" y2="435.7" stroke="#ebebeb" stroke-width="1.6"/><line x1="1758.3" y1="502.5" x2="2197.8" y2="502.5" stroke="#ebebeb" stroke-width="1.6"/><line x1="1758.3" y1="569.7" x2="2197.8" y2="569.7" stroke="#ebebeb" stroke-width="1.6"/><line x1="1758.3" y1="636.5" x2="2197.8" y2="636.5" stroke="#ebebeb" stroke-width="1.6"/><line x1="1758.3" y1="703.6" x2="2197.8" y2="703.6" stroke="#ebebeb" stroke-width="1.6"/><text x="1755.1" y="374.9" text-anchor="end" class="ax">12k</text><text x="1755.1" y="442.0" text-anchor="end" class="ax">10k</text><text x="1755.1" y="508.8" text-anchor="end" class="ax">8k</text><text x="1755.1" y="576.0" text-anchor="end" class="ax">6k</text><text x="1755.1" y="642.8" text-anchor="end" class="ax">4k</text><text x="1755.1" y="709.9" text-anchor="end" class="ax">2k</text><text x="1814.7" y="728.0" text-anchor="middle" class="ax">25</text><text x="1873.2" y="728.0" text-anchor="middle" class="ax">30</text><text x="1931.2" y="728.0" text-anchor="middle" class="ax">35</text><text x="1989.5" y="728.0" text-anchor="middle" class="ax">40</text><text x="2047.4" y="728.0" text-anchor="middle" class="ax">45</text><text x="2106.0" y="728.0" text-anchor="middle" class="ax">50</text><text x="2163.9" y="728.0" text-anchor="middle" class="ax">55</text><polygon points="1758.3,682.1 1806.8,645.7 1855.8,610.8 1904.3,580.8 1953.4,558.6 2001.5,471.5 2050.6,445.5 2099.7,370.2 2148.8,336.9 2197.8,405.0 2197.8,519.0 2148.8,424.6 2099.7,455.0 2050.6,509.5 2001.5,526.9 1953.4,582.3 1904.3,602.9 1855.8,633.0 1806.8,659.9 1758.3,695.7" fill="rgb(166,222,242)" fill-opacity="0.22"/><polyline points="1758.3,688.4 1806.8,653.6 1855.8,621.9 1904.3,591.2 1953.4,569.7 2001.5,499.4 2050.6,476.9 2099.7,412.9 2148.8,380.3 2197.8,461.4" stroke="#a7dff1" stroke-width="4.2" fill="none" stroke-linejoin="round"/><line x1="2310.3" y1="406.6" x2="2749.8" y2="406.6" stroke="#ebebeb" stroke-width="1.6"/><line x1="2310.3" y1="569.7" x2="2749.8" y2="569.7" stroke="#ebebeb" stroke-width="1.6"/><text x="2307.1" y="412.9" text-anchor="end" class="ax">50k</text><text x="2307.1" y="576.0" text-anchor="end" class="ax">0</text><polygon points="2310.3,336.9 2349.2,502.2 2389.5,507.0 2430.0,499.4 2470.5,515.8 2510.8,516.5 2550.3,534.8 2590.9,543.7 2631.1,546.2 2670.7,548.1 2711.8,550.7 2749.8,551.9 2749.8,555.7 2711.8,554.5 2670.7,551.9 2631.1,550.0 2590.9,548.1 2550.3,540.5 2510.8,523.8 2470.5,530.7 2430.0,531.7 2389.5,519.0 2349.2,533.2 2310.3,705.8" fill="rgb(166,222,242)" fill-opacity="0.22"/><polyline points="2310.3,521.5 2349.2,517.4 2389.5,513.3 2430.0,515.8 2470.5,522.8 2510.8,519.0 2550.3,537.4 2590.9,545.9 2631.1,548.1 2670.7,550.0 2711.8,552.6 2749.8,553.8" stroke="#a7dff1" stroke-width="4.2" fill="none" stroke-linejoin="round"/><clipPath id="c4"><rect x="2240" y="318" width="510" height="437.5"/></clipPath><g clip-path="url(#c4)"><text x="2300.8" y="720.1" transform="rotate(90 2300.8 720.1)" class="ax">1978</text><text x="2340.5" y="720.1" transform="rotate(90 2340.5 720.1)" class="ax">1981</text><text x="2380.2" y="720.1" transform="rotate(90 2380.2 720.1)" class="ax">1985</text><text x="2419.8" y="720.1" transform="rotate(90 2419.8 720.1)" class="ax">1988</text><text x="2459.5" y="720.1" transform="rotate(90 2459.5 720.1)" class="ax">1992</text><text x="2499.2" y="720.1" transform="rotate(90 2499.2 720.1)" class="ax">1995</text><text x="2538.9" y="720.1" transform="rotate(90 2538.9 720.1)" class="ax">1999</text><text x="2578.5" y="720.1" transform="rotate(90 2578.5 720.1)" class="ax">2002</text><text x="2618.2" y="720.1" transform="rotate(90 2618.2 720.1)" class="ax">2005</text><text x="2657.9" y="720.1" transform="rotate(90 2657.9 720.1)" class="ax">2009</text><text x="2697.6" y="720.1" transform="rotate(90 2697.6 720.1)" class="ax">2012</text><text x="2737.3" y="720.1" transform="rotate(90 2737.3 720.1)" class="ax">2016</text></g><line x1="102.3" y1="1093.8" x2="541.8" y2="1093.8" stroke="#ebebeb" stroke-width="1.6"/><line x1="102.3" y1="1204.0" x2="541.8" y2="1204.0" stroke="#ebebeb" stroke-width="1.6"/><line x1="102.3" y1="1313.6" x2="541.8" y2="1313.6" stroke="#ebebeb" stroke-width="1.6"/><text x="99.1" y="1100.1" text-anchor="end" class="ax">7000</text><text x="99.1" y="1210.3" text-anchor="end" class="ax">6000</text><text x="99.1" y="1319.9" text-anchor="end" class="ax">5000</text><text x="214.9" y="1425.7" text-anchor="middle" class="ax">TRUE</text><text x="431.9" y="1425.7" text-anchor="middle" class="ax">FALSE</text><line x1="211.9" y1="1148.6" x2="431.9" y2="1148.6" stroke="#b4b4b4" stroke-width="2" stroke-dasharray="6,6"/><g stroke="#a7dff1"><line x1="211.9" y1="1286.4" x2="211.9" y2="1389.0" stroke-width="3.9"/><line x1="204.0" y1="1286.4" x2="219.8" y2="1286.4" stroke-width="3.2"/><line x1="204.0" y1="1389.0" x2="219.8" y2="1389.0" stroke-width="3.2"/></g><circle cx="211.9" cy="1337.7" r="5.8" fill="#a7dff1"/><g stroke="#a7dff1"><line x1="431.9" y1="1082.8" x2="431.9" y2="1142.0" stroke-width="3.9"/><line x1="424.0" y1="1082.8" x2="439.9" y2="1082.8" stroke-width="3.2"/><line x1="424.0" y1="1142.0" x2="439.9" y2="1142.0" stroke-width="3.2"/></g><circle cx="431.9" cy="1112.8" r="5.8" fill="#a7dff1"/><line x1="654.3" y1="1075.8" x2="1093.8" y2="1075.8" stroke="#ebebeb" stroke-width="1.6"/><line x1="654.3" y1="1164.5" x2="1093.8" y2="1164.5" stroke="#ebebeb" stroke-width="1.6"/><line x1="654.3" y1="1252.8" x2="1093.8" y2="1252.8" stroke="#ebebeb" stroke-width="1.6"/><line x1="654.3" y1="1341.5" x2="1093.8" y2="1341.5" stroke="#ebebeb" stroke-width="1.6"/><line x1="654.3" y1="1429.5" x2="1093.8" y2="1429.5" stroke="#ebebeb" stroke-width="1.6"/><text x="651.1" y="1170.8" text-anchor="end" class="ax">8000</text><text x="651.1" y="1259.1" text-anchor="end" class="ax">7000</text><text x="651.1" y="1347.8" text-anchor="end" class="ax">6000</text><text x="651.1" y="1435.8" text-anchor="end" class="ax">5000</text><text x="653.7" y="1458.0" text-anchor="middle" class="ax">0</text><text x="751.8" y="1458.0" text-anchor="middle" class="ax">2</text><text x="849.4" y="1458.0" text-anchor="middle" class="ax">4</text><text x="947.2" y="1458.0" text-anchor="middle" class="ax">6</text><text x="1044.8" y="1458.0" text-anchor="middle" class="ax">8</text><polygon points="654.3,1309.2 702.8,1375.7 751.8,1123.0 800.9,1066.9 849.4,1158.8 898.1,1142.0 947.2,1137.2 995.7,1079.6 1044.8,1168.2 1093.8,1078.0 1093.8,1320.2 1044.8,1401.6 995.7,1283.2 947.2,1349.7 898.1,1366.2 849.4,1309.8 800.9,1215.1 751.8,1260.7 702.8,1437.4 654.3,1408.9" fill="rgb(166,222,242)" fill-opacity="0.22"/><polyline points="654.3,1359.2 702.8,1406.7 751.8,1192.0 800.9,1140.7 849.4,1234.8 898.1,1254.7 947.2,1243.6 995.7,1180.9 1044.8,1285.4 1093.8,1199.9" stroke="#a7dff1" stroke-width="4.2" fill="none" stroke-linejoin="round"/><line x1="1206.3" y1="1128.7" x2="1645.8" y2="1128.7" stroke="#ebebeb" stroke-width="1.6"/><line x1="1206.3" y1="1203.7" x2="1645.8" y2="1203.7" stroke="#ebebeb" stroke-width="1.6"/><line x1="1206.3" y1="1277.5" x2="1645.8" y2="1277.5" stroke="#ebebeb" stroke-width="1.6"/><line x1="1206.3" y1="1352.5" x2="1645.8" y2="1352.5" stroke="#ebebeb" stroke-width="1.6"/><line x1="1206.3" y1="1427.3" x2="1645.8" y2="1427.3" stroke="#ebebeb" stroke-width="1.6"/><text x="1203.1" y="1135.0" text-anchor="end" class="ax">9k</text><text x="1203.1" y="1210.0" text-anchor="end" class="ax">8k</text><text x="1203.1" y="1283.8" text-anchor="end" class="ax">7k</text><text x="1203.1" y="1358.8" text-anchor="end" class="ax">6k</text><text x="1203.1" y="1433.6" text-anchor="end" class="ax">5k</text><text x="1235.1" y="1458.0" text-anchor="middle" class="ax">1</text><text x="1330.1" y="1458.0" text-anchor="middle" class="ax">2</text><text x="1425.8" y="1458.0" text-anchor="middle" class="ax">3</text><text x="1520.8" y="1458.0" text-anchor="middle" class="ax">4</text><text x="1615.8" y="1458.0" text-anchor="middle" class="ax">5</text><polygon points="1235.1,1328.8 1330.1,1296.5 1425.8,1284.5 1520.8,1256.9 1615.8,1073.2 1615.8,1292.7 1520.8,1324.4 1425.8,1343.4 1330.1,1375.0 1235.1,1430.1" fill="rgb(166,222,242)" fill-opacity="0.22"/><polyline points="1235.1,1379.8 1330.1,1336.1 1425.8,1313.9 1520.8,1290.8 1615.8,1183.5" stroke="#a7dff1" stroke-width="4.2" fill="none" stroke-linejoin="round"/><line x1="1758.3" y1="1135.6" x2="2197.8" y2="1135.6" stroke="#ebebeb" stroke-width="1.6"/><line x1="1758.3" y1="1219.5" x2="2197.8" y2="1219.5" stroke="#ebebeb" stroke-width="1.6"/><line x1="1758.3" y1="1303.5" x2="2197.8" y2="1303.5" stroke="#ebebeb" stroke-width="1.6"/><line x1="1758.3" y1="1388.3" x2="2197.8" y2="1388.3" stroke="#ebebeb" stroke-width="1.6"/><text x="1755.1" y="1141.9" text-anchor="end" class="ax">7000</text><text x="1755.1" y="1225.8" text-anchor="end" class="ax">6500</text><text x="1755.1" y="1309.8" text-anchor="end" class="ax">6000</text><text x="1755.1" y="1394.6" text-anchor="end" class="ax">5500</text><text x="1831.1" y="1425.7" text-anchor="middle" class="ax">Married</text><text x="1977.8" y="1425.7" text-anchor="middle" class="ax">Divorced</text><text x="2124.4" y="1425.7" text-anchor="middle" class="ax">Single</text><line x1="1831.1" y1="1219.5" x2="2124.4" y2="1219.5" stroke="#b4b4b4" stroke-width="2" stroke-dasharray="6,6"/><g stroke="#a7dff1"><line x1="1831.1" y1="1108.1" x2="1831.1" y2="1232.2" stroke-width="3.9"/><line x1="1823.2" y1="1108.1" x2="1839.0" y2="1108.1" stroke-width="3.2"/><line x1="1823.2" y1="1232.2" x2="1839.0" y2="1232.2" stroke-width="3.2"/></g><circle cx="1831.1" cy="1170.5" r="5.8" fill="#a7dff1"/><g stroke="#a7dff1"><line x1="1977.8" y1="1082.8" x2="1977.8" y2="1260.7" stroke-width="3.9"/><line x1="1969.8" y1="1082.8" x2="1985.7" y2="1082.8" stroke-width="3.2"/><line x1="1969.8" y1="1260.7" x2="1985.7" y2="1260.7" stroke-width="3.2"/></g><circle cx="1977.8" cy="1171.4" r="5.8" fill="#a7dff1"/><g stroke="#a7dff1"><line x1="2124.4" y1="1256.9" x2="2124.4" y2="1389.0" stroke-width="3.9"/><line x1="2116.5" y1="1256.9" x2="2132.3" y2="1256.9" stroke-width="3.2"/><line x1="2116.5" y1="1389.0" x2="2132.3" y2="1389.0" stroke-width="3.2"/></g><circle cx="2124.4" cy="1322.5" r="5.8" fill="#a7dff1"/><line x1="2310.3" y1="1069.5" x2="2749.8" y2="1069.5" stroke="#ebebeb" stroke-width="1.6"/><line x1="2310.3" y1="1189.5" x2="2749.8" y2="1189.5" stroke="#ebebeb" stroke-width="1.6"/><line x1="2310.3" y1="1309.8" x2="2749.8" y2="1309.8" stroke="#ebebeb" stroke-width="1.6"/><text x="2307.1" y="1195.8" text-anchor="end" class="ax">8k</text><text x="2307.1" y="1316.1" text-anchor="end" class="ax">6k</text><line x1="2346.7" y1="1280.0" x2="2713.4" y2="1280.0" stroke="#b4b4b4" stroke-width="2" stroke-dasharray="6,6"/><g stroke="#a7dff1"><line x1="2346.7" y1="1189.5" x2="2346.7" y2="1268.6" stroke-width="3.9"/><line x1="2338.8" y1="1189.5" x2="2354.6" y2="1189.5" stroke-width="3.2"/><line x1="2338.8" y1="1268.6" x2="2354.6" y2="1268.6" stroke-width="3.2"/></g><circle cx="2346.7" cy="1229.4" r="5.8" fill="#a7dff1"/><g stroke="#a7dff1"><line x1="2419.9" y1="1082.8" x2="2419.9" y2="1389.0" stroke-width="3.9"/><line x1="2412.0" y1="1082.8" x2="2427.8" y2="1082.8" stroke-width="3.2"/><line x1="2412.0" y1="1389.0" x2="2427.8" y2="1389.0" stroke-width="3.2"/></g><circle cx="2419.9" cy="1235.7" r="5.8" fill="#a7dff1"/><g stroke="#a7dff1"><line x1="2493.3" y1="1252.8" x2="2493.3" y2="1306.6" stroke-width="3.9"/><line x1="2485.4" y1="1252.8" x2="2501.2" y2="1252.8" stroke-width="3.2"/><line x1="2485.4" y1="1306.6" x2="2501.2" y2="1306.6" stroke-width="3.2"/></g><circle cx="2493.3" cy="1280.0" r="5.8" fill="#a7dff1"/><g stroke="#a7dff1"><line x1="2566.8" y1="1259.5" x2="2566.8" y2="1305.0" stroke-width="3.9"/><line x1="2558.9" y1="1259.5" x2="2574.7" y2="1259.5" stroke-width="3.2"/><line x1="2558.9" y1="1305.0" x2="2574.7" y2="1305.0" stroke-width="3.2"/></g><circle cx="2566.8" cy="1282.9" r="5.8" fill="#a7dff1"/><g stroke="#a7dff1"><line x1="2639.9" y1="1246.8" x2="2639.9" y2="1365.2" stroke-width="3.9"/><line x1="2632.0" y1="1246.8" x2="2647.9" y2="1246.8" stroke-width="3.2"/><line x1="2632.0" y1="1365.2" x2="2647.9" y2="1365.2" stroke-width="3.2"/></g><circle cx="2639.9" cy="1306.0" r="5.8" fill="#a7dff1"/><g stroke="#a7dff1"><line x1="2713.4" y1="1282.2" x2="2713.4" y2="1367.8" stroke-width="3.9"/><line x1="2705.5" y1="1282.2" x2="2721.3" y2="1282.2" stroke-width="3.2"/><line x1="2705.5" y1="1367.8" x2="2721.3" y2="1367.8" stroke-width="3.2"/></g><circle cx="2713.4" cy="1325.0" r="5.8" fill="#a7dff1"/><clipPath id="c9"><rect x="2240" y="1048" width="510" height="437.5"/></clipPath><g clip-path="url(#c9)"><text x="2344.0" y="1425.0" transform="rotate(30 2344.0 1425.0)" class="ax">Marketing</text><text x="2417.4" y="1425.0" transform="rotate(30 2417.4 1425.0)" class="ax">Human Resources</text><text x="2490.7" y="1425.0" transform="rotate(30 2490.7 1425.0)" class="ax">Medical</text><text x="2564.0" y="1425.0" transform="rotate(30 2564.0 1425.0)" class="ax">Life Sciences</text><text x="2637.4" y="1425.0" transform="rotate(30 2637.4 1425.0)" class="ax">Other</text><text x="2710.7" y="1425.0" transform="rotate(30 2710.7 1425.0)" class="ax">Technical Degree</text></g></svg>
</body></html>
